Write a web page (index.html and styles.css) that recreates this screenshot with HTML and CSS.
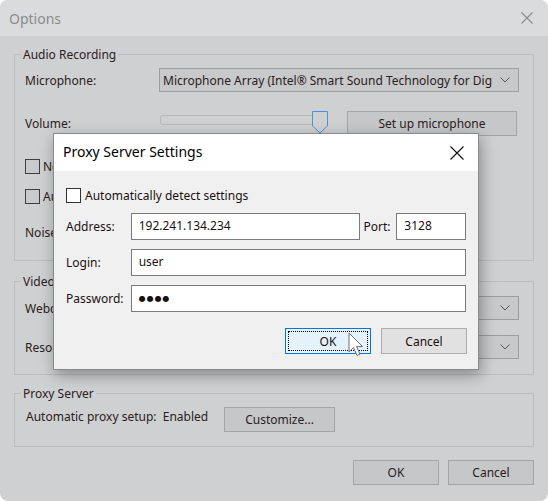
FILE: index.html
```html
<!DOCTYPE html>
<html lang="en">
<head>
    <meta charset="UTF-8">
    <title>Options</title>
    <link rel="stylesheet" href="styles.css">
</head>
<body>

<div class="window">
    <div class="titlebar">
        <span class="title">Options</span>
        <svg class="close" width="12" height="12" viewBox="0 0 12 12"><path d="M0.5 0.5 L11.5 11.5 M11.5 0.5 L0.5 11.5" stroke="#8c8c8c" stroke-width="1.1" fill="none"/></svg>
    </div>

    <div class="content">
        <!-- Audio -->
        <div class="group audio">
            <span class="legend">Audio Recording</span>
            <div class="row mic-row">
                <span class="label">Microphone:</span>
                <div class="select wide">
                    <span class="select-text">Microphone Array (Intel® Smart Sound Technology for Digital Microphones)</span>
                    <svg class="chev" width="10" height="6" viewBox="0 0 10 6"><path d="M0.5 0.5 L5 5 L9.5 0.5" stroke="#555" fill="none"/></svg>
                </div>
            </div>
            <div class="row vol-row">
                <span class="label">Volume:</span>
                <div class="slider">
                    <div class="track"></div>
                    <svg class="thumb" width="16" height="23" viewBox="0 0 16 23"><path d="M0.5 0.5 H15.5 V15 L8 22 L0.5 15 Z" fill="#cfd0d2" stroke="#4f8fd6"/></svg>
                </div>
                <button class="btn setup">Set up microphone</button>
            </div>
            <label class="check-row first"><span class="box"></span>Normalize volume</label>
            <label class="check-row"><span class="box"></span>Automatic gain control</label>
            <div class="row noise-row"><span class="label">Noise suppression:</span></div>
        </div>

        <!-- Video -->
        <div class="group video">
            <span class="legend">Video Recording</span>
            <div class="row cam-row">
                <span class="label">Webcam:</span>
                <div class="select wide">
                    <span class="select-text">Integrated Camera</span>
                    <svg class="chev" width="10" height="6" viewBox="0 0 10 6"><path d="M0.5 0.5 L5 5 L9.5 0.5" stroke="#555" fill="none"/></svg>
                </div>
            </div>
            <div class="row res-row">
                <span class="label">Resolution:</span>
                <div class="select wide">
                    <span class="select-text">1280 x 720</span>
                    <svg class="chev" width="10" height="6" viewBox="0 0 10 6"><path d="M0.5 0.5 L5 5 L9.5 0.5" stroke="#555" fill="none"/></svg>
                </div>
            </div>
        </div>

        <!-- Proxy -->
        <div class="group proxy">
            <span class="legend">Proxy Server</span>
            <div class="row proxy-row">
                <span class="proxy-status">Automatic proxy setup:&nbsp; Enabled</span>
                <button class="btn customize">Customize...</button>
            </div>
        </div>

        <div class="footer">
            <button class="btn footer-btn">OK</button>
            <button class="btn footer-btn">Cancel</button>
        </div>
    </div>

    <!-- Proxy dialog -->
    <div class="dialog">
        <div class="dialog-title">
            <span>Proxy Server Settings</span>
            <svg width="14" height="14" viewBox="0 0 14 14"><path d="M0.5 0.5 L13.5 13.5 M13.5 0.5 L0.5 13.5" stroke="#111" stroke-width="1.1" fill="none"/></svg>
        </div>
        <div class="dialog-body">
            <label class="auto-row"><span class="box white"></span>Automatically detect settings</label>
            <div class="field-row">
                <span class="field-label">Address:</span>
                <div class="input address">192.241.134.234</div>
                <span class="port-label">Port:</span>
                <div class="input port">3128</div>
            </div>
            <div class="field-row">
                <span class="field-label">Login:</span>
                <div class="input full">user</div>
            </div>
            <div class="field-row">
                <span class="field-label">Password:</span>
                <div class="input full dots">&#9679;&#9679;&#9679;&#9679;</div>
            </div>
            <div class="dialog-buttons">
                <button class="dbtn ok"><span class="focus">OK</span></button>
                <button class="dbtn">Cancel</button>
            </div>
        </div>
    </div>

    <svg class="cursor" width="18" height="26" viewBox="0 0 18 26"><path d="M1 1 L1 20 L5.5 15.5 L9 23.5 L12 22.2 L8.6 14.6 L14.6 14.6 Z" fill="#fff" stroke="#6e6e6e" stroke-width="1" stroke-linejoin="round"/></svg>
</div>

</body>
</html>
```

FILE: styles.css
```css
body {
    margin: 0;
    background: #fff;
    font-family: "Noto Sans", "DejaVu Sans", sans-serif;
    font-size: 12px;
    color: #2a2020;
}
.window {
    position: relative;
    width: 548px;
    height: 501px;
    background: #cfd0d2;
    border-radius: 8px;
    overflow: hidden;
}
.titlebar {
    height: 36px;
    background: #dadbdc;
    display: flex;
    align-items: center;
    justify-content: space-between;
    padding: 0 15px 0 9px;
}
.title {
    font-size: 14px;
    color: #8a8b8d;
}
.content {
    padding: 18px 14px 0 14px;
}
.group {
    position: relative;
    border: 1px solid #bcbdbf;
}
.legend {
    position: absolute;
    top: -9px;
    left: 6px;
    padding: 0 2px;
    background: #cfd0d2;
    line-height: 18px;
}
.audio {
    height: 205px;
}
.video {
    margin-top: 20px;
    height: 92px;
}
.proxy {
    margin-top: 18px;
    height: 52px;
}
.row {
    display: flex;
    align-items: center;
    padding-left: 10px;
}
.label {
    width: 134px;
}
.mic-row {
    margin-top: 13px;
}
.select {
    height: 24px;
    box-sizing: border-box;
    border: 1px solid #9d9ea0;
    background: #c8c9cb;
    display: flex;
    align-items: center;
    padding: 0 8px 0 3px;
}
.wide {
    width: 360px;
}
.select-text {
    flex: 1;
    white-space: nowrap;
    overflow: hidden;
}
.chev {
    margin-left: 8px;
}
.vol-row {
    margin-top: 19px;
}
.slider {
    position: relative;
    width: 168px;
    height: 25px;
    margin-left: 1px;
    border-bottom: 1px solid #8c8c8e;
    box-sizing: border-box;
}
.track {
    position: absolute;
    left: 0;
    top: 4px;
    width: 166px;
    height: 10px;
    border: 1px solid #b7b8ba;
    border-radius: 2px;
    box-sizing: border-box;
}
.thumb {
    position: absolute;
    left: 152px;
    top: 0;
}
.btn {
    font-family: inherit;
    font-size: 12px;
    color: #2a2020;
    background: #c6c7c9;
    border: 1px solid #a3a4a6;
    height: 25px;
    padding: 0;
}
.setup {
    width: 170px;
    margin-left: 19px;
}
.check-row {
    display: flex;
    align-items: center;
    margin-left: 10px;
    height: 16px;
    gap: 3px;
}
.check-row.first {
    margin-top: 22px;
}
.check-row + .check-row {
    margin-top: 14px;
}
.box {
    width: 13px;
    height: 13px;
    border: 1px solid #3e3e3e;
    background: #c9cacc;
    flex: none;
}
.box.white {
    background: #fff;
    border-color: #333;
}
.noise-row {
    margin-top: 20px;
}
.cam-row {
    margin-top: 14px;
}
.res-row {
    margin-top: 15px;
}
.proxy-row {
    margin-top: 13px;
    padding-left: 11px;
}
.proxy-status {
    width: 198px;
    line-height: 18px;
    margin-top: -6px;
}
.customize {
    width: 111px;
}
.footer {
    display: flex;
    justify-content: flex-end;
    gap: 9px;
    margin-top: 13px;
}
.footer-btn {
    width: 86px;
}

/* Dialog on top */
.dialog {
    position: absolute;
    left: 53px;
    top: 133px;
    width: 426px;
    height: 237px;
    box-sizing: border-box;
    border: 1px solid #8a8a8a;
    background: #f0f0f0;
    box-shadow: 2px 5px 14px rgba(0, 0, 0, 0.35);
    color: #1a1010;
}
.dialog-title {
    height: 37px;
    box-sizing: border-box;
    background: #fff;
    display: flex;
    align-items: center;
    justify-content: space-between;
    padding: 0 14px 2px 9px;
    font-size: 14px;
    color: #000;
}
.dialog-title svg {
    margin-top: 2px;
}
.dialog-body {
    padding: 16px 12px 0 12px;
}
.auto-row {
    display: flex;
    align-items: center;
    gap: 4px;
    height: 16px;
}
.field-row {
    display: flex;
    align-items: center;
    margin-top: 9px;
}
.auto-row + .field-row {
    margin-top: 10px;
}
.field-label {
    width: 65px;
}
.input {
    height: 27px;
    box-sizing: border-box;
    border: 1px solid #7a7a7a;
    background: #fff;
    padding: 0 0 3px 7px;
    display: flex;
    align-items: center;
}
.address {
    width: 231px;
}
.port-label {
    margin: 0 3px;
    width: 30px;
}
.port {
    width: 70px;
}
.full {
    width: 337px;
}
.dots {
    font-size: 8px;
    letter-spacing: 1px;
    padding-bottom: 2px;
}
.dialog-buttons {
    display: flex;
    justify-content: flex-end;
    gap: 10px;
    margin-top: 16px;
    width: 401px;
}
.dbtn {
    width: 86px;
    height: 26px;
    font-family: inherit;
    font-size: 12px;
    color: #1a1010;
    background: #e1e1e1;
    border: 1px solid #adadad;
    padding: 0;
}
.dbtn.ok {
    background: #e5f1fb;
    border-color: #0078d7;
    padding: 2px;
}
.focus {
    display: flex;
    align-items: center;
    justify-content: center;
    height: 100%;
    box-sizing: border-box;
    border: 1px dotted #000;
}
.cursor {
    position: absolute;
    left: 348px;
    top: 332px;
}
```
